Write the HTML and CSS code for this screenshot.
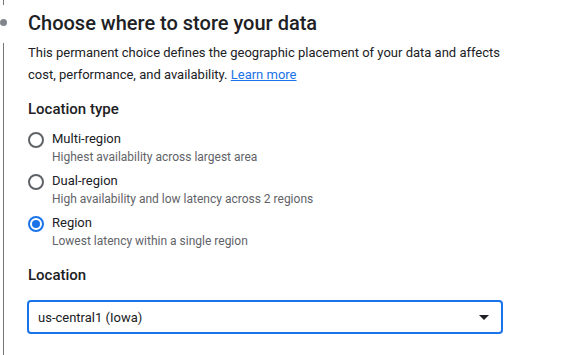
FILE: index.html
```html
<!DOCTYPE html>
<html lang="en">
<head>
  <meta charset="UTF-8">
  <title>Choose where to store your data</title>
  <link rel="stylesheet" href="styles.css">
</head>
<body>
  <div class="step">
    <!-- stepper rail on the left -->
    <div class="rail">
      <div class="rail-line rail-top"></div>
      <div class="rail-dot"></div>
      <div class="rail-line rail-rest"></div>
    </div>

    <div class="content">
      <h1>Choose where to store your data</h1>
      <p class="intro">This permanent choice defines the geographic placement of your data and affects cost, performance, and availability. <a href="#">Learn more</a></p>

      <h2 class="type-label">Location type</h2>
      <div class="options">
        <label class="option">
          <span class="radio"></span>
          <span class="option-text">
            <span class="option-title">Multi-region</span>
            <span class="option-sub">Highest availability across largest area</span>
          </span>
        </label>
        <label class="option">
          <span class="radio"></span>
          <span class="option-text">
            <span class="option-title">Dual-region</span>
            <span class="option-sub">High availability and low latency across 2 regions</span>
          </span>
        </label>
        <label class="option">
          <span class="radio checked"></span>
          <span class="option-text">
            <span class="option-title">Region</span>
            <span class="option-sub">Lowest latency within a single region</span>
          </span>
        </label>
      </div>

      <h2 class="location-label">Location</h2>
      <div class="select">
        <span>us-central1 (Iowa)</span>
        <span class="caret"></span>
      </div>
    </div>
  </div>
</body>
</html>
```

FILE: styles.css
```css
* {
  margin: 0;
  padding: 0;
  box-sizing: border-box;
}
body {
  font-family: Roboto, "Liberation Sans", sans-serif;
  background: #fff;
  color: #202124;
  height: 355px;
  overflow: hidden;
}

/* Step layout */
.step {
  display: flex;
  height: 355px;
}
.rail {
  width: 7px;
  display: flex;
  flex-direction: column;
  align-items: center;
}
.rail-line {
  width: 1px;
  background: #757575;
}
.rail-top {
  height: 5px;
}
.rail-dot {
  width: 7px;
  height: 7px;
  border-radius: 50%;
  background: #80868b;
  margin-top: 14px;
}
.rail-rest {
  flex: 1;
  margin-top: 17px;
}

.content {
  margin-left: 21px;
  padding-top: 9px;
}
h1 {
  font-size: 20px;
  font-weight: 500;
  line-height: 28px;
  color: #202124;
}
.intro {
  margin-top: 5px;
  font-size: 13px;
  line-height: 22px;
  color: #202124;
  width: 480px;
}
.intro a {
  color: #1a73e8;
  text-decoration: underline;
}

h2 {
  font-size: 15px;
  font-weight: 500;
  line-height: 20px;
  color: #202124;
}
.type-label {
  margin-top: 13px;
}

/* Radio options */
.options {
  margin-top: 11px;
  display: flex;
  flex-direction: column;
  gap: 6px;
}
.option {
  display: flex;
  align-items: flex-start;
}
.radio {
  width: 16px;
  height: 16px;
  border: 2px solid #5f6368;
  border-radius: 50%;
  margin: 2px 8px 0 0;
  display: flex;
  justify-content: center;
  align-items: center;
}
.radio.checked {
  border-color: #1a73e8;
}
.radio.checked::after {
  content: "";
  width: 8px;
  height: 8px;
  border-radius: 50%;
  background: #1a73e8;
}
.option-text {
  display: flex;
  flex-direction: column;
}
.option-title {
  font-size: 13px;
  line-height: 18px;
  color: #202124;
}
.option-sub {
  font-size: 12px;
  line-height: 18px;
  color: #5f6368;
}

.location-label {
  margin-top: 15px;
}

/* Select box */
.select {
  margin: 15px 0 0 -1px;
  width: 476px;
  height: 34px;
  border: 2px solid #1a73e8;
  border-radius: 4px;
  display: flex;
  align-items: center;
  justify-content: space-between;
  padding: 1px 12px 0 9px;
  font-size: 13px;
  color: #202124;
}
.caret {
  width: 0;
  height: 0;
  border-left: 5px solid transparent;
  border-right: 5px solid transparent;
  border-top: 5px solid #202124;
}
```
